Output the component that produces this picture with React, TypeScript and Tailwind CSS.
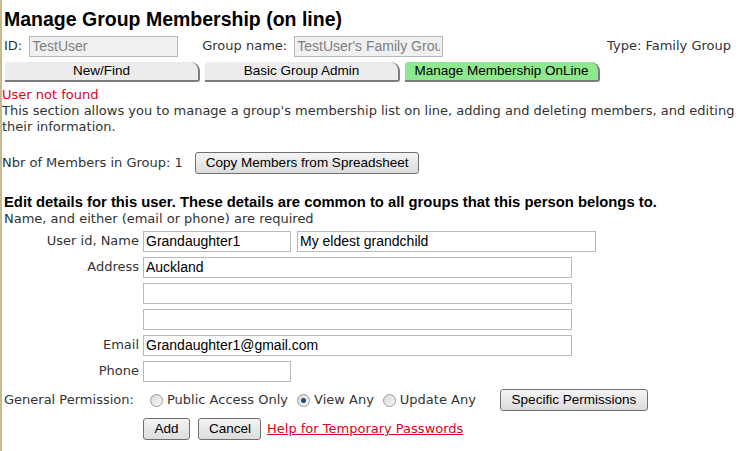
import React from "react";

const verdana = { fontFamily: '"DejaVu Sans", Verdana, sans-serif' } as const;

function Tab({ label, active }: { label: string; active?: boolean }) {
  return (
    <div
      className={
        "h-[20px] w-[195px] flex items-center justify-center text-[13.5px] text-black border-b-2 border-r-2 border-[#7c7c7c] rounded-tr-[9px] rounded-br-[3px] rounded-tl-[3px] " +
        (active ? "bg-[#8ee88e]" : "bg-[#ececec]")
      }
      style={{ fontFamily: '"Liberation Sans", Arial, sans-serif' }}
    >
      {label}
    </div>
  );
}

function Btn({ children, className = "" }: { children: React.ReactNode; className?: string }) {
  return (
    <button
      className={
        "h-[22px] px-[10px] border border-[#707070] rounded-[3px] bg-gradient-to-b from-[#f4f4f4] to-[#dcdcdc] text-[13.5px] text-black leading-none whitespace-nowrap " +
        className
      }
      style={{ fontFamily: '"Liberation Sans", Arial, sans-serif' }}
    >
      {children}
    </button>
  );
}

function Field({ w, value = "", disabled }: { w: number; value?: string; disabled?: boolean }) {
  return (
    <input
      readOnly
      value={value}
      className={
        "h-[21px] border border-[#b8b8b8] px-[2px] text-[14px] outline-none " +
        (disabled ? "bg-[#f0f0f0] text-[#808080]" : "bg-white text-black")
      }
      style={{ width: w, fontFamily: '"Liberation Sans", Arial, sans-serif' }}
    />
  );
}

function Radio({ checked }: { checked?: boolean }) {
  return (
    <span className="w-[13px] h-[13px] mr-[4px] rounded-full border border-[#9a9a9a] bg-gradient-to-br from-[#d8d8d8] to-[#f8f8f8] flex items-center justify-center shrink-0">
      {checked && <span className="w-[5px] h-[5px] rounded-full bg-[#1d4f7a]" />}
    </span>
  );
}

function Row({ label, children }: { label: string; children: React.ReactNode }) {
  return (
    <div className="flex items-center h-[26px]">
      <div className="w-[139px] text-right pr-[4px] text-[13px] text-[#333]">{label}</div>
      <div className="flex items-center gap-[6px]">{children}</div>
    </div>
  );
}

export default function App() {
  return (
    <div className="w-[746px] h-[451px] bg-white border-l-2 border-[#c8b98e] overflow-hidden relative" style={verdana}>
      <div className="pl-[2px]">
        <h1
          className="text-[19.5px] font-bold text-black pt-[7px] leading-[24px]"
          style={{ fontFamily: '"Liberation Sans", Arial, sans-serif' }}
        >
          Manage Group Membership (on line)
        </h1>
        <div className="flex items-center h-[22px] mt-[4px] text-[13px] text-[#333]">
          <span className="mr-[7px]">ID:</span>
          <Field w={149} value="TestUser" disabled />
          <span className="ml-[24px] mr-[7px]">Group name:</span>
          <Field w={149} value="TestUser's Family Group" disabled />
          <span className="ml-auto mr-[15px]">Type: Family Group</span>
        </div>
        <div className="flex gap-[5px] mt-[5px] pl-[1px]">
          <Tab label="New/Find" />
          <Tab label="Basic Group Admin" />
          <Tab label="Manage Membership OnLine" active />
        </div>
        <div className="text-[13px] leading-[16px] mt-[5px] -ml-[2px]">
          <div className="text-[#e0001b]">User not found</div>
          <p className="text-[#333] whitespace-nowrap">
            This section allows you to manage a group's membership list on line, adding and deleting members, and editing
            <br />
            their information.
          </p>
          <div className="flex items-center mt-[17px] text-[#333]">
            <span className="mr-[12px]">Nbr of Members in Group: 1</span>
            <Btn>Copy Members from Spreadsheet</Btn>
          </div>
        </div>
        <div
          className="text-[14.8px] font-bold text-black mt-[20px] leading-[16px]"
          style={{ fontFamily: '"Liberation Sans", Arial, sans-serif' }}
        >
          Edit details for this user. These details are common to all groups that this person belongs to.
        </div>
        <div className="text-[13px] text-[#333] leading-[16px] mt-[1px]">Name, and either (email or phone) are required</div>
        <div className="mt-[1px]">
          <Row label="User id, Name">
            <Field w={148} value="Grandaughter1" />
            <Field w={299} value="My eldest grandchild" />
          </Row>
          <Row label="Address">
            <Field w={429} value="Auckland" />
          </Row>
          <Row label="">
            <Field w={429} />
          </Row>
          <Row label="">
            <Field w={429} />
          </Row>
          <Row label="Email">
            <Field w={429} value="Grandaughter1@gmail.com" />
          </Row>
          <Row label="Phone">
            <Field w={148} />
          </Row>
        </div>
        <div className="flex items-center h-[28px] mt-[2px] text-[13px] text-[#333]">
          <span className="w-[146px]">General Permission:</span>
          <span className="flex items-center">
            <Radio />
            Public Access Only
          </span>
          <span className="flex items-center ml-[9px]">
            <Radio checked />
            View Any
          </span>
          <span className="flex items-center ml-[9px]">
            <Radio />
            Update Any
          </span>
          <Btn className="ml-[24px] w-[148px] px-0">Specific Permissions</Btn>
        </div>
        <div className="flex items-center mt-[4px] pl-[139px] gap-[8px]">
          <Btn className="w-[47px] px-0">Add</Btn>
          <Btn className="w-[63px] px-0">Cancel</Btn>
          <a className="text-[13px] text-[#e0001b] underline ml-[-2px]" href="#">
            Help for Temporary Passwords
          </a>
        </div>
      </div>
    </div>
  );
}
